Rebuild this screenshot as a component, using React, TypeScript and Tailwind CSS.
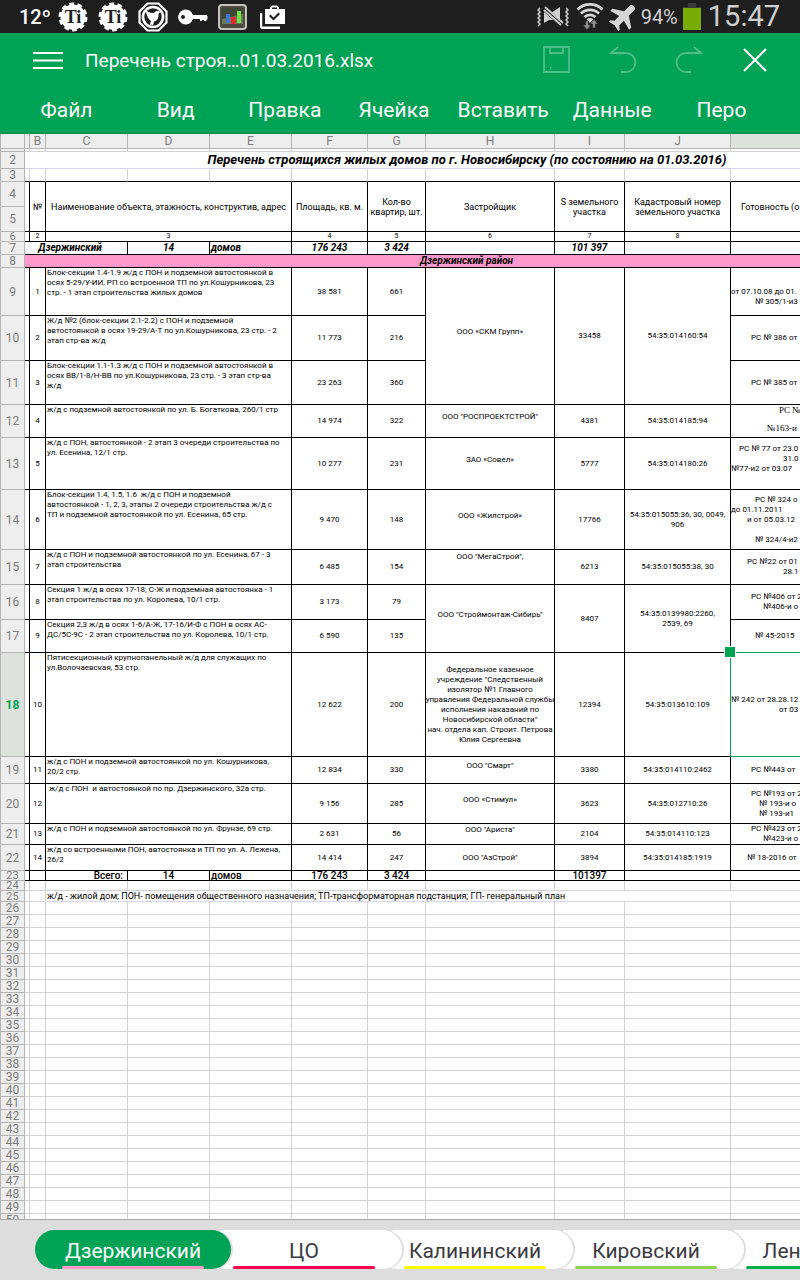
import { useState } from "react";
import type { ReactNode } from "react";

interface KLine {
  text: string;
  pad: string;
}

interface SheetRow {
  row: number;
  height: number;
  num: string;
  name: string;
  area: string;
  flats: string;
  builder?: string;
  builderPad?: string;
  span?: number;
  plot?: string;
  cadastre?: string;
  permit: KLine[];
  serif?: boolean;
}

const columns = [
  { name: "", width: 25 },
  { name: "", width: 5 },
  { name: "B", width: 16 },
  { name: "C", width: 82 },
  { name: "D", width: 82 },
  { name: "E", width: 82 },
  { name: "F", width: 76 },
  { name: "G", width: 58 },
  { name: "H", width: 129 },
  { name: "I", width: 70 },
  { name: "J", width: 106 },
  { name: "K", width: 178 },
];

const rows: SheetRow[] = [
  {
    row: 9, height: 48, num: "1", area: "38 581", flats: "661", span: 3,
    name: "Блок-секции 1.4-1.9 ж/д с ПОН и подземной автостоянкой в\nосях 5-29/У-ИИ, РП со встроенной ТП по ул.Кошурникова, 23\nстр. - 1 этап строительства жилых домов",
    builder: "ООО «СКМ Групп»", builderPad: "pb-2", plot: "33458", cadastre: "54:35:014160:54",
    permit: [{ text: " ", pad: "pl-0" }, { text: "от 07.10.08 до 01.", pad: "pl-0" }, { text: "№ 305/1-и3", pad: "pl-6" }],
  },
  {
    row: 10, height: 45, num: "2", area: "11 773", flats: "216",
    name: "Ж/д №2 (блок-секции 2.1-2.2) с ПОН и подземной\nавтостоянкой в осях 19-29/А-Т по ул.Кошурникова, 23 стр. - 2\nэтап стр-ва ж/д",
    permit: [{ text: "РС № 386 от", pad: "pl-5" }],
  },
  {
    row: 11, height: 44, num: "3", area: "23 263", flats: "360",
    name: "Блок-секции 1.1-1.3 ж/д с ПОН и подземной автостоянкой в\nосях ВВ/1-8/Н-ВВ по ул.Кошурникова, 23 стр. - 3 этап стр-ва\nж/д",
    permit: [{ text: "РС № 385 от", pad: "pl-5" }],
  },
  {
    row: 12, height: 33, num: "4", area: "14 974", flats: "322", span: 1,
    name: "ж/д с подземной автостоянкой по ул. Б. Богаткова, 260/1 стр",
    builder: "ООО \"РОСПРОЕКТСТРОЙ\"", builderPad: "pb-2", plot: "4381", cadastre: "54:35:014185:94",
    permit: [{ text: "РС №", pad: "pl-12" }, { text: " ", pad: "pl-0" }, { text: "№163-и", pad: "pl-9" }],
    serif: true,
  },
  {
    row: 13, height: 52, num: "5", area: "10 277", flats: "231", span: 1,
    name: "ж/д с ПОН, автостоянкой - 2 этап 3 очереди строительства по\nул. Есенина, 12/1 стр.",
    builder: "ЗАО «Совел»", builderPad: "pb-2", plot: "5777", cadastre: "54:35:014180:26",
    permit: [{ text: "РС № 77 от 23.0", pad: "pl-2" }, { text: "31.0", pad: "pl-13" }, { text: "№77-и2 от 03.07", pad: "pl-0" }, { text: " ", pad: "pl-0" }],
  },
  {
    row: 14, height: 60, num: "6", area: "9 470", flats: "148", span: 1,
    name: "Блок-секции 1.4, 1.5, 1.6  ж/д с ПОН и подземной\nавтостоянкой - 1, 2, 3, этапы 2 очереди строительства ж/д с\nТП и подземной автостоянкой по ул. Есенина, 65 стр.",
    builder: "ООО «Жилстрой»", builderPad: "pb-2", plot: "17766", cadastre: "54:35:015055:36, 30, 0049,\n906",
    permit: [{ text: "РС № 324 о", pad: "pl-6" }, { text: "до 01.11.2011", pad: "pl-0" }, { text: "и от 05.03.12", pad: "pl-4" }, { text: " ", pad: "pl-0" }, { text: "№ 324/4-и2", pad: "pl-6" }],
  },
  {
    row: 15, height: 35, num: "7", area: "6 485", flats: "154", span: 1,
    name: "ж/д с ПОН и подземной автостоянкой по ул. Есенина, 67 - 3\nэтап строительства",
    builder: "ООО \"МегаСтрой\",", builderPad: "pb-5", plot: "6213", cadastre: "54:35:015055:38, 30",
    permit: [{ text: "РС №22 от 01", pad: "pl-4" }, { text: "28.1", pad: "pl-13" }],
  },
  {
    row: 16, height: 35, num: "8", area: "3 173", flats: "79", span: 2,
    name: "Секция 1 ж/д в осях 17-18; С-Ж и подземная автостоянка - 1\nэтап строительства по ул. Королева, 10/1 стр.",
    builder: "ООО \"Строймонтаж-Сибирь\"", builderPad: "pb-2", plot: "8407", cadastre: "54:35:0139980:2260,\n2539, 69",
    permit: [{ text: "РС №406 от 2", pad: "pl-5" }, { text: "№406-и о", pad: "pl-8" }],
  },
  {
    row: 17, height: 33, num: "9", area: "6 590", flats: "135",
    name: "Секция 2,3 ж/д в осях 1-6/А-Ж, 17-16/И-Ф с ПОН в осях АС-\nДС/5С-9С - 2 этап строительства по ул. Королева, 10/1 стр.",
    permit: [{ text: "№ 45-2015", pad: "pl-6" }],
  },
  {
    row: 18, height: 104, num: "10", area: "12 622", flats: "200", span: 1,
    name: "Пятисекционный крупнопанельный ж/д для служащих по\nул.Волочаевская, 53 стр.",
    builder: "Федеральное казенное\nучреждение \"Следственный\nизолятор №1 Главного\nуправления Федеральной службы\nисполнения наказаний по\nНовосибирской области\"\nнач. отдела кап. Строит. Петрова\nЮлия Сергеевна",
    plot: "12394", cadastre: "54:35:013610:109",
    permit: [{ text: "№ 242 от 28.28.12", pad: "pl-0" }, { text: "от 03", pad: "pl-12" }],
  },
  {
    row: 19, height: 27, num: "11", area: "12 834", flats: "330", span: 1,
    name: "ж/д с ПОН и подземной автостоянкой по ул. Кошурникова,\n20/2 стр.",
    builder: "ООО \"Смарт\"", builderPad: "pb-2", plot: "3380", cadastre: "54:35:014110:2462",
    permit: [{ text: "РС №443 от", pad: "pl-5" }],
  },
  {
    row: 20, height: 40, num: "12", area: "9 156", flats: "285", span: 1,
    name: " ж/д с ПОН  и автостоянкой по пр. Дзержинского, 32а стр.",
    builder: "ООО «Стимул»", builderPad: "pb-2", plot: "3623", cadastre: "54:35:012710:26",
    permit: [{ text: "РС №193 от 2", pad: "pl-5" }, { text: "№ 193-и о", pad: "pl-7" }, { text: "№ 193-и1", pad: "pl-7" }],
  },
  {
    row: 21, height: 21, num: "13", area: "2 631", flats: "56", span: 1,
    name: "ж/д с ПОН и подземной автостоянкой по ул. Фрунзе, 69 стр.",
    builder: "ООО \"Ариста\"", builderPad: "pb-2", plot: "2104", cadastre: "54:35:014110:123",
    permit: [{ text: "РС №423 от 2", pad: "pl-5" }, { text: "№423-и о", pad: "pl-8" }],
  },
  {
    row: 22, height: 26, num: "14", area: "14 414", flats: "247", span: 1,
    name: "ж/д со встроенными ПОН, автостоянка и ТП по ул. А. Лежена,\n26/2",
    builder: "ООО \"АзСтрой\"", plot: "3894", cadastre: "54:35:014185:1919",
    permit: [{ text: "№ 18-2016 от", pad: "pl-4" }],
  },
];

const menu = ["Файл", "Вид", "Правка", "Ячейка", "Вставить", "Данные", "Перо"];

const tabs = [
  { name: "Дзержинский", bar: "bg-[#ff99cc]", z: "z-50" },
  { name: "ЦО", bar: "bg-[#ff0050]", z: "z-40" },
  { name: "Калининский", bar: "bg-[#ffff00]", z: "z-30" },
  { name: "Кировский", bar: "bg-[#92d050]", z: "z-20" },
  { name: "Ленинский", bar: "bg-[#00b050]", z: "z-10" },
];

const emptyRows = Array.from({ length: 25 }, (_, i) => 26 + i);

const grid = "border-r border-b border-[#d3d3d3]";
const black = "border-r border-b border-black";
const small = "text-[8px] leading-[10px]";
const middle = "text-center align-middle whitespace-pre";

function RowHead({ n, height, active }: { n: number; height: number; active?: boolean }) {
  return (
    <th
      scope="row"
      className={
        active
          ? "border-x border-b border-[#b4b4b4] bg-[#dde2dc] text-[#00a355] font-bold not-italic text-[12px]"
          : "border-x border-b border-[#b4b4b4] bg-[#eeeeee] text-[#7d7d7d] font-normal not-italic text-[12px]"
      }
      style={{ height }}
    >
      {n > 1 && <div className={height < 13 ? "text-[11px] leading-[9px]" : "leading-[12px]"}>{n}</div>}
    </th>
  );
}

function Cell({ children, className, col = 1, row = 1 }: { children?: ReactNode; className: string; col?: number; row?: number }) {
  return (
    <td colSpan={col} rowSpan={row} className={className}>
      {children}
    </td>
  );
}

function Gear() {
  return (
    <svg className="w-[30px] h-[30px]" viewBox="0 0 30 30" fill="#fff">
      <circle cx="15" cy="15" r="12.6" />
      <circle cx="15" cy="15" r="12.900" fill="none" stroke="#fff" strokeWidth="3.200" strokeDasharray="4.800 3.300" />
      <text x="15" y="21" textAnchor="middle" fontFamily="Liberation Serif, serif" fontWeight="bold" fontSize="18" fill="#1e1e1e">Ti</text>
    </svg>
  );
}

function StatusBar() {
  return (
    <div className="h-[33px] shrink-0 bg-[#1e1e1e] flex items-center justify-between pl-[19px] pr-5">
      <div className="flex items-center">
        <span className="text-[20px] leading-none font-medium text-white w-[39px]">12º</span>
        <Gear />
        <div className="w-[10px]" />
        <Gear />
        <svg className="w-[30px] h-[30px] ml-[10px]" viewBox="0 0 30 30" fill="none" stroke="#fff">
          <path d="M9.5 1.5h11L28.500 9.500v11l-8 8h-11l-8-8v-11z" strokeWidth="2.200" />
          <circle cx="15" cy="15" r="10" strokeWidth="2.600" />
          <path d="M8 8c2 2.500 5 3 8 3l2-2h3l1 1.500-1.500 1C21 16 19 19 16 19.500l-1 4-1.500-1-2 .8 1.500-4.300C10 17 8 12 8 8z" fill="#fff" stroke="none" />
        </svg>
        <svg className="w-[30px] h-[16px] ml-[10px]" viewBox="0 0 30 16" fill="#fff">
          <path fillRule="evenodd" d="M8 .5a7.500 7.500 0 1 0 6.800 9.500H22v2h2v-1h2v1h2l1.500-2V7l-1-1H14.800A7.500 7.500 0 0 0 8 .5zM5 6a2 2 0 1 1 0 4 2 2 0 0 1 0-4z" />
        </svg>
        <svg className="w-[29px] h-[26px] ml-[10px]" viewBox="0 0 29 26">
          <rect x="1" y="1" width="27" height="24" rx="3" fill="#4b4b43" stroke="#c4c4bc" strokeWidth="2" />
          <rect x="4" y="4" width="21" height="16" fill="#6a7a52" />
          <path d="M4 4h21v6L4 15z" fill="#3d4733" />
          <rect x="8" y="10" width="4" height="9" fill="#3f74d8" />
          <rect x="13" y="13" width="5" height="7" fill="#e02d33" />
          <rect x="19" y="7" width="4" height="12" fill="#6fe04a" />
        </svg>
        <svg className="w-[26px] h-[24px] ml-[13px]" viewBox="0 0 26 24" fill="#fff">
          <path fillRule="evenodd" d="M5 4h5V2.500L12 .5h5L19 2.500V4h6v15H5zM12 4h5V2.500h-5zM9 11l4.500 4.500L20 9l-1.500-1.500-5 5-3-3z" />
          <path d="M0 8h2.200v13.500H20V24H2a2 2 0 0 1-2-2z" />
        </svg>
      </div>
      <div className="flex items-center text-[#cfcfcf]">
        <svg className="w-[32px] h-[22px]" viewBox="0 0 32 22" fill="none" stroke="#cfcfcf">
          <path d="M3 2l-2 2 2 2-2 2 2 2-2 2 2 2-2 2 2 2-2 2M29 2l2 2-2 2 2 2-2 2 2 2-2 2 2 2-2 2 2 2" strokeWidth="1.500" />
          <path d="M7 6v11l5-3h5zM14 7l9-6v14z" fill="#cfcfcf" stroke="none" />
          <path d="M7 2l19 18" stroke="#1e1e1e" strokeWidth="5" />
          <path d="M8 1l18 16M7 4l17 15" strokeWidth="1.800" />
        </svg>
        <svg className="w-[28px] h-[28px] ml-[7px]" viewBox="0 0 28 28" fill="none" stroke="#d6d6d6">
          <path d="M1.500 6.500a18 18 0 0 1 25 0M5 10.500a13 13 0 0 1 18 0M8.500 14a8 8 0 0 1 11 0" strokeWidth="2.700" />
          <path d="M10.500 16.500a5 5 0 0 1 7 0L14 20z" fill="#d6d6d6" stroke="none" />
          <path d="M9.500 18v4H7l4 5 4-5h-2.500v-4zM16.500 25v-4H14l4-5 4 5h-2.500v4z" fill="#8d8d8d" stroke="#1e1e1e" strokeWidth=".6" />
        </svg>
        <svg className="w-[32px] h-[32px] ml-[3px]" viewBox="0 0 24 24" fill="#d6d6d6">
          <path transform="rotate(45 12 12)" d="M22 15.500v-2.200l-7.500-5V3a2.500 2.500 0 0 0-5 0v5.300L2 13.300v2.200l7.500-2v5l-2.500 2V22l5-1.200 5 1.200v-1.500l-2.500-2v-5z" />
        </svg>
        <span className="text-[20px] leading-none ml-[2px]">94%</span>
        <svg className="w-[18px] h-[28px] ml-[5px]" viewBox="0 0 18 28">
          <path d="M5 0h8v4h5v3H0V4h5z" fill="#3b3b3b" />
          <rect y="5" width="18" height="22" fill="#7aac08" />
        </svg>
        <span className="text-[29px] leading-none ml-[7px]">15:47</span>
      </div>
    </div>
  );
}

function TopBar() {
  return (
    <header className="shrink-0 bg-[#00a355] text-white border-b border-[#0b8a4c]">
      <div className="h-[54px] flex items-center pl-[33px] pr-[33px]">
        <button aria-label="Меню">
          <svg className="w-[30px] h-[17px]" viewBox="0 0 30 17" stroke="#fff" strokeWidth="2">
            <path d="M0 1h30M0 8.500h30M0 16h30" />
          </svg>
        </button>
        <h1 className="ml-[22px] text-[19px] leading-none">Перечень строя…01.03.2016.xlsx</h1>
        <div className="ml-auto flex items-center">
          <button aria-label="Сохранить">
            <svg className="w-[28px] h-[28px]" viewBox="0 0 28 28" fill="none" stroke="#fff" strokeOpacity=".3" strokeWidth="1.800">
              <path d="M1 1h25v25H1zM7 1v6h13V1M7 22h1.500" />
            </svg>
          </button>
          <button aria-label="Отменить" className="ml-[38px]">
            <svg className="w-[28px] h-[28px]" viewBox="0 0 28 28" fill="none" stroke="#fff" strokeOpacity=".3" strokeWidth="1.800">
              <path d="M9 1L2 7h15a9.500 9.500 0 0 1 0 19h-5" />
            </svg>
          </button>
          <button aria-label="Повторить" className="ml-[38px]">
            <svg className="w-[28px] h-[28px]" viewBox="0 0 28 28" fill="none" stroke="#fff" strokeOpacity=".3" strokeWidth="1.800">
              <path d="M19 1l7 6H11a9.500 9.500 0 0 0 0 19h5" />
            </svg>
          </button>
          <button aria-label="Закрыть" className="ml-[40px]">
            <svg className="w-[24px] h-[24px]" viewBox="0 0 24 24" stroke="#fff" strokeWidth="2">
              <path d="M1 1l22 22M23 1L1 23" />
            </svg>
          </button>
        </div>
      </div>
      <nav className="h-[46px] grid grid-cols-7 pl-3 pr-6">
        {menu.map((item) => (
          <button key={item} className="text-[21px] leading-none text-center">{item}</button>
        ))}
      </nav>
    </header>
  );
}

function PlainCells({ count }: { count: number }) {
  return (
    <>
      {Array.from({ length: count }, (_, i) => (
        <td key={i} className={grid} />
      ))}
    </>
  );
}

function Sheet() {
  return (
    <table className="table-fixed w-[909px] border-separate border-spacing-0 bg-white text-black">
      <colgroup>
        {columns.map((c, i) => (
          <col key={i} style={{ width: c.width }} />
        ))}
      </colgroup>
      <thead>
        <tr>
          {columns.map((c, i) => (
            <th
              key={i}
              scope="col"
              className={
                c.name === "K"
                  ? "h-[15px] border-r border-b border-[#b4b4b4] bg-[#dde2dc]"
                  : i === 0
                  ? "h-[15px] border-x border-b border-[#b4b4b4] bg-[#eeeeee]"
                  : "h-[15px] border-r border-b border-[#b4b4b4] bg-[#eeeeee] text-[12px] leading-[14px] font-normal text-[#7d7d7d]"
              }
            >
              {c.name === "K" ? "" : c.name}
            </th>
          ))}
        </tr>
      </thead>
      <tbody>
        <tr>
          <RowHead n={1} height={3} />
          <PlainCells count={11} />
        </tr>
        <tr>
          <RowHead n={2} height={17} />
          <Cell col={11} className="border-b border-[#d6d6ec] text-center text-[13px] leading-[16px] font-bold italic whitespace-nowrap">
            Перечень строящихся жилых домов по г. Новосибирску (по состоянию на 01.03.2016)
          </Cell>
        </tr>
        <tr>
          <RowHead n={3} height={13} />
          {columns.slice(1).map((c, i) => (
            <td key={i} className="border-r border-b border-r-[#d3d3d3] border-b-black" />
          ))}
        </tr>
        <tr className="text-[9px] leading-[10px]">
          <RowHead n={4} height={25} />
          <Cell row={2} className={black} />
          <Cell row={2} className={black + " " + middle}>№</Cell>
          <Cell row={2} col={3} className={black + " " + middle}>Наименование объекта, этажность, конструктив, адрес</Cell>
          <Cell row={2} className={black + " " + middle}>Площадь, кв. м.</Cell>
          <Cell row={2} className={black + " " + middle}>{"Кол-во\nквартир, шт."}</Cell>
          <Cell row={2} className={black + " " + middle}>Застройщик</Cell>
          <Cell row={2} className={black + " " + middle}>{"S земельного\nучастка"}</Cell>
          <Cell row={2} className={black + " " + middle}>{"Кадастровый номер\nземельного участка"}</Cell>
          <Cell row={2} className={black + " align-middle whitespace-pre pl-[10px]"}>Готовность (о</Cell>
        </tr>
        <tr>
          <RowHead n={5} height={25} />
        </tr>
        <tr className="text-[7px] leading-[9px]">
          <RowHead n={6} height={10} />
          <Cell className={black} />
          <Cell className={black + " " + middle}>2</Cell>
          <Cell col={3} className={black + " " + middle}>3</Cell>
          <Cell className={black + " " + middle}>4</Cell>
          <Cell className={black + " " + middle}>5</Cell>
          <Cell className={black + " " + middle}>6</Cell>
          <Cell className={black + " " + middle}>7</Cell>
          <Cell className={black + " " + middle}>8</Cell>
          <Cell className={black} />
        </tr>
        <tr className="text-[10px] leading-[12px] font-bold italic">
          <RowHead n={7} height={13} />
          <Cell col={3} className={black + " " + middle + " pr-3"}>Дзержинский</Cell>
          <Cell className={black + " " + middle}>14</Cell>
          <Cell className={black + " pl-px"}>домов</Cell>
          <Cell className={black + " " + middle}>176 243</Cell>
          <Cell className={black + " " + middle}>3 424</Cell>
          <Cell className={black} />
          <Cell className={black + " " + middle}>101 397</Cell>
          <Cell className={black} />
          <Cell className={black} />
        </tr>
        <tr className="text-[10px] leading-[12px] font-bold italic">
          <RowHead n={8} height={13} />
          <Cell col={11} className={black + " bg-[#ff99cc] text-center"}>Дзержинский район</Cell>
        </tr>
        {rows.map((r) => (
          <tr key={r.row} className={small}>
            <RowHead n={r.row} height={r.height} active={r.row === 18} />
            <Cell className={black} />
            <Cell className={black + " " + middle}>{r.num}</Cell>
            <Cell col={3} className={black + " align-top whitespace-pre pl-px"}>{r.name}</Cell>
            <Cell className={black + " " + middle}>{r.area}</Cell>
            <Cell className={black + " " + middle}>{r.flats}</Cell>
            {r.span && (
              <>
                <Cell row={r.span} className={black + " " + middle + " " + (r.builderPad || "")}>
                  <div className="flex justify-center">{r.builder}</div>
                </Cell>
                <Cell row={r.span} className={black + " " + middle}>{r.plot}</Cell>
                <Cell row={r.span} className={black + " " + middle}>
                  <div className="flex justify-center">{r.cadastre}</div>
                </Cell>
              </>
            )}
            <td className={black + " relative align-middle whitespace-pre"}>
              <div className={r.serif ? "font-['Liberation_Serif',serif] text-[9px] leading-[9px] pb-1" : ""}>
                {r.permit.map((line, i) => (
                  <div key={i} className={line.pad}>{line.text}</div>
                ))}
              </div>
              {r.row === 18 && (
                <>
                  <div className="absolute -left-px -top-px -bottom-px right-0 border border-[#00a355]" />
                  <div className="absolute -left-[7px] -top-[7px] w-3 h-3 bg-[#00a355] border border-white" />
                </>
              )}
            </td>
          </tr>
        ))}
        <tr className="text-[10px] leading-[9px] font-medium">
          <RowHead n={23} height={10} />
          <Cell className={black} />
          <Cell className={black} />
          <Cell className={black + " text-right pr-1"}>Всего:</Cell>
          <Cell className={black + " " + middle}>14</Cell>
          <Cell className={black + " pl-px"}>домов</Cell>
          <Cell className={black + " " + middle}>176 243</Cell>
          <Cell className={black + " " + middle}>3 424</Cell>
          <Cell className={black} />
          <Cell className={black + " " + middle}>101397</Cell>
          <Cell className={black} />
          <Cell className={black} />
        </tr>
        <tr>
          <RowHead n={24} height={10} />
          <PlainCells count={11} />
        </tr>
        <tr>
          <RowHead n={25} height={11} />
          <PlainCells count={2} />
          <Cell col={9} className="border-b border-[#d6d6ec] text-[9px] leading-[10px] whitespace-nowrap pl-px">
            ж/д - жилой дом; ПОН- помещения общественного назначения; ТП-трансформаторная подстанция; ГП- генеральный план
          </Cell>
        </tr>
        {emptyRows.map((n) => (
          <tr key={n}>
            <RowHead n={n} height={13} />
            <PlainCells count={11} />
          </tr>
        ))}
      </tbody>
    </table>
  );
}

export default function App() {
  const [active, setActive] = useState("Дзержинский");

  return (
    <div className="h-screen flex flex-col overflow-hidden bg-[#dddddd] font-[Roboto,sans-serif]">
      <StatusBar />
      <TopBar />
      <main className="flex-1 min-h-0 overflow-hidden border-b border-[#a8a8a8]">
        <Sheet />
      </main>
      <footer className="h-[60px] shrink-0 flex pl-[35px] pt-[10px] overflow-hidden">
        {tabs.map((tab, i) => (
          <button
            key={tab.name}
            onClick={() => setActive(tab.name)}
            className={
              "relative shrink-0 w-[196px] h-[39px] rounded-[20px] flex flex-col items-center justify-between text-[21px] shadow-[2px_0_0_#dddddd] " +
              tab.z +
              (i > 0 ? " -ml-[25px]" : "") +
              (active === tab.name ? " bg-[#00a355] text-white" : " bg-white text-[#3a3a3f]")
            }
          >
            <span className="leading-[42px] h-9">{tab.name}</span>
            <span className={"w-[142px] h-[3px] rounded-sm " + tab.bar} />
          </button>
        ))}
      </footer>
    </div>
  );
}
